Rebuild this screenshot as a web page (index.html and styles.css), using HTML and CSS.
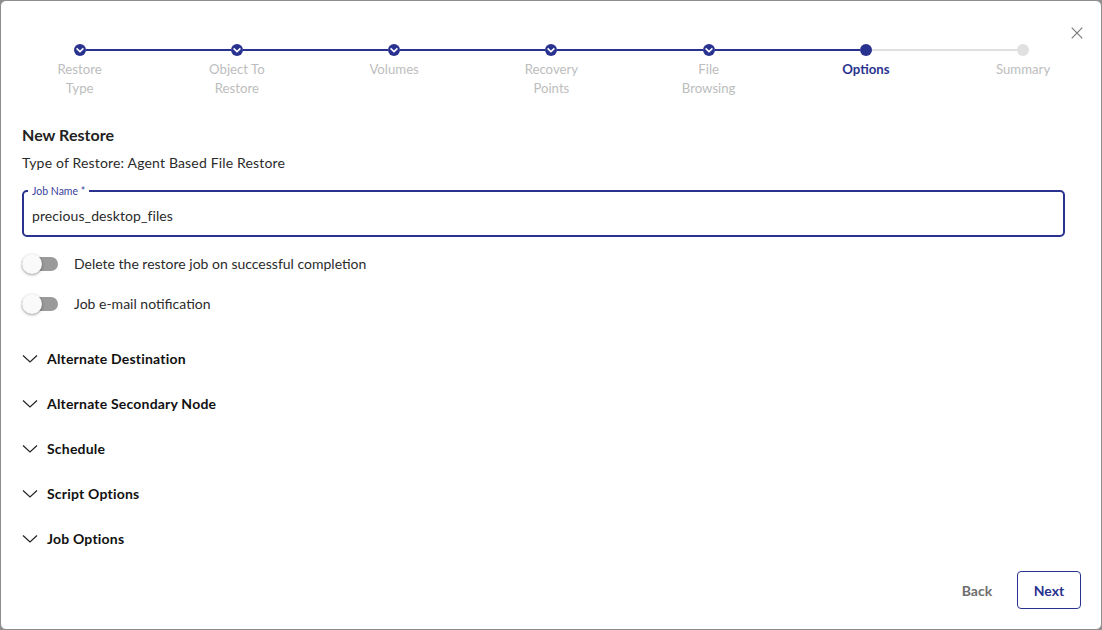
FILE: index.html
```html
<!DOCTYPE html>
<html lang="en">
<head>
<meta charset="utf-8">
<title>New Restore</title>
<link rel="stylesheet" href="styles.css">
</head>
<body>
<div class="dialog">
  <button class="close" aria-label="Close">
    <svg width="12" height="12" viewBox="0 0 12 12"><path d="M.7.7l10.6 10.6M11.3.7L.7 11.3" fill="none" stroke="#757575" stroke-width="1.1"/></svg>
  </button>
  <ol class="stepper">
    <li class="step done"><span class="dot"><svg width="12" height="12" viewBox="0 0 12 12"><path d="M2.6 4.4L6 7.6l3.4-3.2" fill="none" stroke="#fff" stroke-width="1.5"/></svg></span><span class="label">Restore<br>Type</span></li>
    <li class="step done"><span class="dot"><svg width="12" height="12" viewBox="0 0 12 12"><path d="M2.6 4.4L6 7.6l3.4-3.2" fill="none" stroke="#fff" stroke-width="1.5"/></svg></span><span class="label">Object To<br>Restore</span></li>
    <li class="step done"><span class="dot"><svg width="12" height="12" viewBox="0 0 12 12"><path d="M2.6 4.4L6 7.6l3.4-3.2" fill="none" stroke="#fff" stroke-width="1.5"/></svg></span><span class="label">Volumes</span></li>
    <li class="step done"><span class="dot"><svg width="12" height="12" viewBox="0 0 12 12"><path d="M2.6 4.4L6 7.6l3.4-3.2" fill="none" stroke="#fff" stroke-width="1.5"/></svg></span><span class="label">Recovery<br>Points</span></li>
    <li class="step done"><span class="dot"><svg width="12" height="12" viewBox="0 0 12 12"><path d="M2.6 4.4L6 7.6l3.4-3.2" fill="none" stroke="#fff" stroke-width="1.5"/></svg></span><span class="label">File<br>Browsing</span></li>
    <li class="step active"><span class="dot"></span><span class="label">Options</span></li>
    <li class="step todo"><span class="dot"></span><span class="label">Summary</span></li>
  </ol>
  <main class="content">
    <h1 class="title">New Restore</h1>
    <p class="type">Type of Restore: Agent Based File Restore</p>
    <fieldset class="field">
      <legend class="legend">Job Name *</legend>
      <span class="value">precious_desktop_files</span>
    </fieldset>
    <div class="toggles">
      <div class="toggle-row"><span class="switch"><span class="thumb"></span></span><span>Delete the restore job on successful completion</span></div>
      <div class="toggle-row"><span class="switch"><span class="thumb"></span></span><span>Job e-mail notification</span></div>
    </div>
    <div class="sections">
      <div class="section"><svg class="chev" width="16" height="10" viewBox="0 0 16 10"><path d="M1 1.5l7 6.5 7-6.5" fill="none" stroke="#222" stroke-width="1.2"/></svg><span>Alternate Destination</span></div>
      <div class="section"><svg class="chev" width="16" height="10" viewBox="0 0 16 10"><path d="M1 1.5l7 6.5 7-6.5" fill="none" stroke="#222" stroke-width="1.2"/></svg><span>Alternate Secondary Node</span></div>
      <div class="section"><svg class="chev" width="16" height="10" viewBox="0 0 16 10"><path d="M1 1.5l7 6.5 7-6.5" fill="none" stroke="#222" stroke-width="1.2"/></svg><span>Schedule</span></div>
      <div class="section"><svg class="chev" width="16" height="10" viewBox="0 0 16 10"><path d="M1 1.5l7 6.5 7-6.5" fill="none" stroke="#222" stroke-width="1.2"/></svg><span>Script Options</span></div>
      <div class="section"><svg class="chev" width="16" height="10" viewBox="0 0 16 10"><path d="M1 1.5l7 6.5 7-6.5" fill="none" stroke="#222" stroke-width="1.2"/></svg><span>Job Options</span></div>
    </div>
  </main>
  <footer class="actions">
    <button class="btn back">Back</button>
    <button class="btn next">Next</button>
  </footer>
</div>
</body>
</html>
```
FILE: styles.css
```css
* { box-sizing: border-box; }
html, body { margin: 0; height: 100%; background: #8d8d8d; }
body { font-family: "Lato", "Noto Sans", sans-serif; color: #2b2b2b; font-size: 14px; }
.dialog {
  position: relative;
  width: 1102px; height: 630px;
  background: #fff;
  border: 1px solid #8d8d8d;
  border-radius: 6px;
  display: flex; flex-direction: column;
  overflow: hidden;
}
.close {
  position: absolute; top: 26px; right: 18px;
  width: 12px; height: 12px; padding: 0; border: 0; background: none; display: block; line-height: 0;
}
.stepper {
  list-style: none; margin: 0; padding: 43px 0 0 0;
  display: grid; grid-template-columns: repeat(7, 157.25px);
  height: 100px;
}
.step { position: relative; display: flex; flex-direction: column; align-items: center; }
.step + .step::before {
  content: ""; position: absolute; top: 5px; height: 2px;
  left: calc(-50% + 6px); right: calc(50% + 6px);
  background: #29338f;
}
.step.todo::before { background: #e0e0e0; }
.dot { width: 12px; height: 12px; border-radius: 50%; background: #29338f; display: block; line-height: 0; }
.todo .dot { background: #e0e0e0; }
.label { margin-top: 4px; text-align: center; line-height: 19px; color: #bdbdbd; font-size: 13.2px; }
.active .label { color: #29338f; font-weight: 700; }
.content { padding: 0 36px 0 21px; flex: 1; }
.title { margin: 24px 0 0; font-size: 16px; line-height: 20px; font-weight: 700; color: #222; letter-spacing: .05px; }
.type { margin: 8px 0 0; line-height: 20px; letter-spacing: .17px; }
.field {
  margin: 12px 0 0; padding: 0 8px; min-width: 0;
  height: 52px;
  border: 2px solid #29338f; border-radius: 5px;
  display: block;
}
.legend { margin-left: -4px; padding: 0 4px; font-size: 10.5px; line-height: 12px; color: #3a44a0; }
.value { display: block; margin-top: 9px; line-height: 20px; letter-spacing: .09px; }
.toggles { margin-top: 16px; display: flex; flex-direction: column; gap: 20px; }
.toggle-row { display: flex; align-items: center; height: 20px; gap: 16px; }
.switch { position: relative; top: 1px; width: 36px; height: 14px; border-radius: 7px; background: #9a9a9a; display: block; }
.thumb { position: absolute; left: 0; top: -3px; width: 20px; height: 20px; border-radius: 50%; background: #fafafa; box-shadow: 0 1px 3px rgba(0,0,0,.4); }
.sections { margin-top: 23px; display: flex; flex-direction: column; }
.section { height: 45px; display: flex; align-items: center; gap: 9px; font-weight: 700; color: #111; letter-spacing: .2px; }
.chev { flex: none; }
.actions { display: flex; justify-content: flex-end; align-items: center; gap: 16px; padding: 0 20px 20px 0; }
.btn { font: 700 14px "Lato", sans-serif; background: none; border-radius: 4px; height: 38px; }
.back { border: 0; color: #6e6e6e; width: 48px; padding: 0; }
.next { width: 64px; border: 1px solid #29338f; color: #29338f; padding: 0; }
```
